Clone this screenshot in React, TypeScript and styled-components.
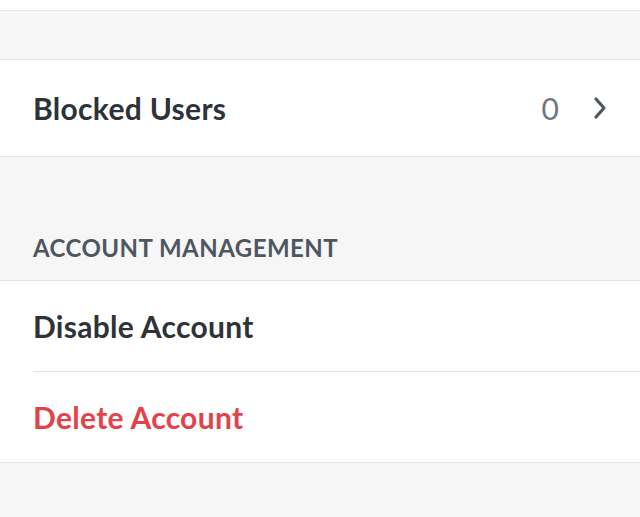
import React from 'react'
import styled, { createGlobalStyle } from 'styled-components'

const GlobalStyle = createGlobalStyle`
  html, body {
    margin: 0;
    padding: 0;
    background: #f6f6f7;
    font-family: Lato, "Open Sans", sans-serif;
    -webkit-font-smoothing: antialiased;
  }
`

const Page = styled.div`
  display: flex;
  flex-direction: column;
  min-height: 517px;
  background: #f6f6f7;
`

const Section = styled.section`
  background: #ffffff;
  border-top: 1px solid #e3e5e8;
  border-bottom: 1px solid #e3e5e8;
`

const TopCap = styled.div`
  height: 10px;
  background: #ffffff;
  border-bottom: 1px solid #e3e5e8;
`

const Spacer = styled.div<{ $h: number }>`
  height: ${({ $h }) => $h}px;
`

const SectionHeader = styled.h3`
  margin: 0;
  padding: 0 33px 18px;
  font-size: 24px;
  line-height: 29px;
  font-weight: 700;
  letter-spacing: 0.45px;
  color: #4f5660;
  text-transform: uppercase;
`

const Row = styled.div`
  display: flex;
  align-items: center;
  height: 96px;
  padding: 0 33px;
`

const InsetRow = styled.div`
  display: flex;
  align-items: center;
  height: 90px;
  margin-left: 33px;
  padding-right: 33px;
  & + & {
    border-top: 1px solid #e3e5e8;
  }
`

const Label = styled.span<{ $danger?: boolean }>`
  flex: 1;
  font-size: 30px;
  font-weight: 700;
  letter-spacing: 0.3px;
  color: ${({ $danger }) => ($danger ? '#e2434b' : '#2e3338')};
`

const Count = styled.span`
  font-size: 30px;
  color: #72767d;
  margin-right: 34px;
`

const Chevron = () => (
  <svg width="14" height="24" viewBox="0 0 14 24" fill="none">
    <path d="M3 3l8 9-8 9" stroke="#4f5660" strokeWidth="3.2" strokeLinecap="round" strokeLinejoin="round" />
  </svg>
)

export default function App() {
  return (
    <Page>
      <GlobalStyle />
      <TopCap />
      <Spacer $h={48} />
      <Section>
        <Row>
          <Label>Blocked Users</Label>
          <Count>0</Count>
          <Chevron />
        </Row>
      </Section>
      <Spacer $h={76} />
      <SectionHeader>Account Management</SectionHeader>
      <Section>
        <InsetRow>
          <Label>Disable Account</Label>
        </InsetRow>
        <InsetRow>
          <Label $danger>Delete Account</Label>
        </InsetRow>
      </Section>
    </Page>
  )
}
